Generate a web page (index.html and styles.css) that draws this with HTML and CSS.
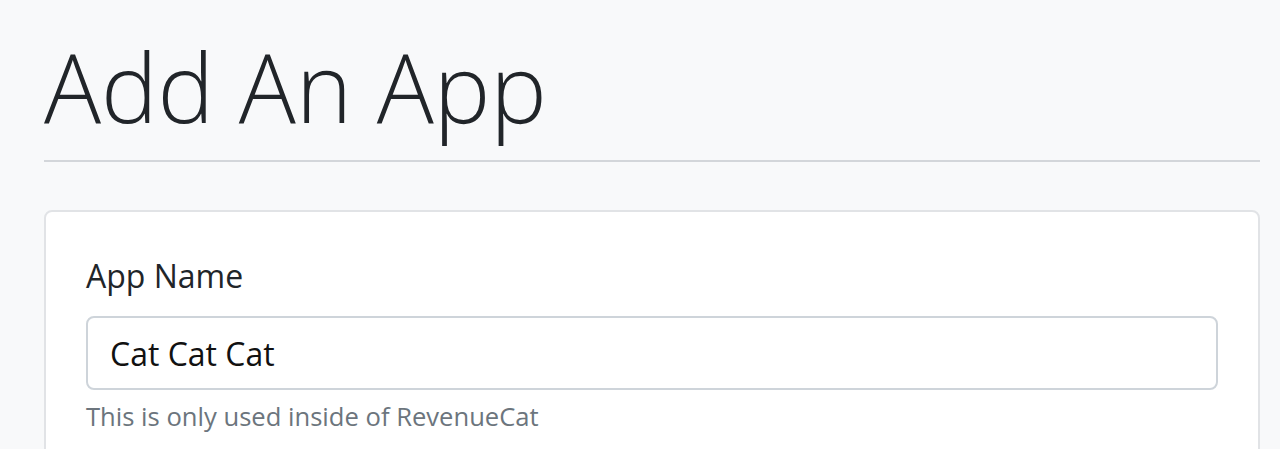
FILE: index.html
```html
<!DOCTYPE html>
<html lang="en">
<head>
    <meta charset="UTF-8">
    <meta name="viewport" content="width=device-width, initial-scale=1.0">
    <title>Add An App</title>
    <link rel="stylesheet" href="styles.css">
</head>
<body>

    <div class="container">
        <h1 class="page-title">Add An App</h1>
        <hr class="divider">

        <form class="card">
            <div class="form-group">
                <label for="appName">App Name</label>
                <input type="text" id="appName" value="Cat Cat Cat">
                <small class="help-text">This is only used inside of RevenueCat</small>
            </div>
        </form>
    </div>

</body>
</html>
```

FILE: styles.css
```css
body {
    font-family: 'Open Sans', sans-serif;
    background-color: #f8f9fa;
    color: #212529;
    margin: 0;
}
.container {
    padding: 0 20px 0 44px;
}
.page-title {
    font-size: 95px;
    font-weight: 300;
    line-height: 1.2;
    margin: 0;
    padding-top: 29px;
}
.divider {
    border: none;
    border-top: 2px solid #d3d6da;
    margin: 17px 0 48px;
}
.card {
    background-color: white;
    border: 2px solid #e1e3e6;
    border-radius: 8px;
    padding: 40px 40px 40px;
}
.form-group {
    display: flex;
    flex-direction: column;
}
label {
    font-size: 32px;
    line-height: 1.5;
    margin-bottom: 16px;
}
input[type="text"] {
    font-family: 'Open Sans', sans-serif;
    font-size: 32px;
    color: #111;
    height: 74px;
    box-sizing: border-box;
    padding: 0 22px;
    border: 2px solid #ced4da;
    border-radius: 8px;
}
.help-text {
    font-size: 25.6px;
    line-height: 1.5;
    color: #6c757d;
    margin-top: 8px;
}
```
